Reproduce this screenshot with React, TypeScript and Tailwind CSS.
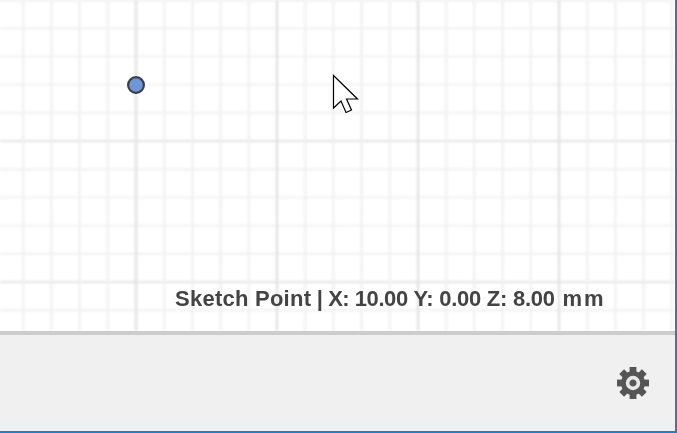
import React from "react";

const STEP = 28.2;
const W = 675;
const H = 331;
const xs = Array.from({ length: 25 }, (_, i) => 23.2 + i * STEP);
const ys = Array.from({ length: 12 }, (_, i) => i * STEP);
const teeth = [0, 45, 90, 135, 180, 225, 270, 315];

export default function App() {
  return (
    <div className="flex h-[433px] w-[677px] flex-col overflow-hidden border-r-2 border-b-2 border-[#1a80d4] bg-white font-['Liberation_Sans',Arial,sans-serif]">
      <div className="relative h-[331px] shrink-0 overflow-hidden">
        <svg width={W} height={H} viewBox={`0 0 ${W} ${H}`} className="block blur-[0.8px]">
          {ys.map((y, i) => (
            <line key={`h${i}`} x1={-5} x2={W + 5} y1={y} y2={y} stroke={i % 5 === 0 ? "#e8e8e8" : "#f3f3f3"} strokeWidth={2.4} />
          ))}
          {xs.map((x, i) => (
            <line key={`v${i}`} x1={x} x2={x} y1={-5} y2={H + 5} stroke={(i + 1) % 5 === 0 ? "#e2e2e2" : "#f1f1f1"} strokeWidth={2.4} />
          ))}
        </svg>
        <svg width={22} height={22} viewBox="0 0 22 22" className="absolute left-[125px] top-[74px] blur-[0.35px]">
          <circle cx={11} cy={11} r={7.9} fill="#6f97d6" stroke="#3a3e46" strokeWidth={2.2} />
        </svg>
        <svg width={30} height={42} viewBox="0 0 30 42" className="absolute left-[330px] top-[72px]">
          <path d="M3.5 3.5 L3.5 36 L11 29 L16 40.5 L21.5 38 L16.5 27 L27.5 27 Z" fill="#fff" stroke="#000" strokeWidth={1.2} />
        </svg>
        <span className="absolute left-[175px] top-[286px] whitespace-nowrap text-[22px] leading-[26px] font-bold text-[#444444] blur-[0.5px]">
          <span className="tracking-[0.25px]">Sketch Point</span>
          <span className="tracking-[-0.5px]"> | X: </span>
          <span className="tracking-[-0.42px]">10.00 </span>
          <span className="tracking-[-0.2px]">Y: </span>
          <span className="tracking-[-0.3px]">0.00 </span>
          <span className="tracking-[-0.2px]">Z: </span>
          <span className="tracking-[-0.3px]">8.00 </span>
          <span className="ml-[2px] tracking-[2px]">mm</span>
        </span>
      </div>
      <div className="flex min-h-0 flex-1 items-center justify-end border-t-4 border-[#cccccc] bg-[#f0f0f0] pr-[26px]">
        <svg width={32} height={32} viewBox="-16 -16 32 32" className="mt-[-1px] blur-[0.5px]">
          {teeth.map((a) => (
            <rect key={a} x={-3.4} y={-16} width={6.8} height={8} fill="#555555" transform={`rotate(${a})`} />
          ))}
          <circle r={12} fill="#555555" />
          <circle r={5.4} fill="#555555" stroke="#e8e8e8" strokeWidth={3.6} />
        </svg>
      </div>
    </div>
  );
}
